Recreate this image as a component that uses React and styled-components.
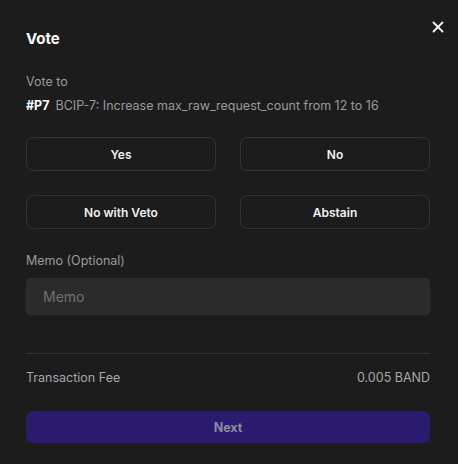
import styled, { createGlobalStyle } from "styled-components";

const GlobalStyle = createGlobalStyle`
  html, body {
    margin: 0;
    background: #1c1c1c;
  }
  * {
    box-sizing: border-box;
  }
`;

const Modal = styled.div`
  position: relative;
  width: 458px;
  height: 464px;
  padding: 29px 28px 0 26px;
  background: #1c1c1c;
  font-family: Inter, "Noto Sans", sans-serif;
  color: #ffffff;
`;

const Title = styled.h2`
  margin: 0;
  font-size: 15px;
  line-height: 20px;
  font-weight: 700;
`;

const CloseButton = styled.button`
  position: absolute;
  top: 19px;
  right: 12px;
  width: 16px;
  height: 16px;
  padding: 0;
  border: none;
  background: none;
  cursor: pointer;
  display: flex;
  align-items: center;
  justify-content: center;
`;

const Label = styled.div`
  font-size: 12.5px;
  line-height: 18px;
  color: #9a9a9a;
  margin-top: ${({ $top }) => $top || 0}px;
`;

const Proposal = styled.div`
  margin-top: 6px;
  font-size: 12.5px;
  line-height: 18px;
  color: #9a9a9a;
  white-space: nowrap;

  b {
    color: #ffffff;
    font-weight: 700;
    margin-right: 6px;
  }
`;

const Options = styled.div`
  margin-top: 22px;
  display: grid;
  grid-template-columns: 1fr 1fr;
  column-gap: 24px;
  row-gap: 24px;
`;

const Option = styled.button`
  height: 34px;
  border: 1px solid #343434;
  border-radius: 7px;
  background: transparent;
  color: #f0f0f0;
  font-family: inherit;
  font-size: 12px;
  font-weight: 600;
  cursor: pointer;
`;

const MemoInput = styled.input`
  display: block;
  width: 100%;
  height: 37px;
  margin-top: 8px;
  padding: 0 16px;
  border: 1px solid #303030;
  border-radius: 4px;
  background: #2b2b2b;
  color: #ffffff;
  font-family: inherit;
  font-size: 14px;
  outline: none;

  &::placeholder {
    color: #707070;
  }
`;

const Divider = styled.hr`
  margin: 38px 0 0;
  border: none;
  border-top: 1px solid #333333;
`;

const FeeRow = styled.div`
  margin-top: 15px;
  display: flex;
  justify-content: space-between;
  align-items: center;
  font-size: 12.5px;
  line-height: 18px;
  color: #a8a8a8;
`;

const NextButton = styled.button`
  display: block;
  width: 100%;
  height: 32px;
  margin-top: 24px;
  border: none;
  border-radius: 7px;
  background: #2a1b6e;
  color: #8c8a9c;
  font-family: inherit;
  font-size: 12.5px;
  font-weight: 700;
`;

const options = ["Yes", "No", "No with Veto", "Abstain"];

const App = () => {
  return (
    <>
      <GlobalStyle />
      <Modal>
        <CloseButton aria-label="Close">
          <svg width="12" height="12" viewBox="0 0 12 12">
            <path d="M1.5 1.5L10.5 10.5M10.5 1.5L1.5 10.5" stroke="#ffffff" strokeWidth="1.8" strokeLinecap="round" />
          </svg>
        </CloseButton>
        <Title>Vote</Title>
        <Label $top={24}>Vote to</Label>
        <Proposal>
          <b>#P7</b>BCIP-7: Increase max_raw_request_count from 12 to 16
        </Proposal>
        <Options>
          {options.map((opt) => (
            <Option key={opt}>{opt}</Option>
          ))}
        </Options>
        <Label $top={23}>Memo (Optional)</Label>
        <MemoInput placeholder="Memo" />
        <Divider />
        <FeeRow>
          <span>Transaction Fee</span>
          <span>0.005 BAND</span>
        </FeeRow>
        <NextButton disabled>Next</NextButton>
      </Modal>
    </>
  );
};

export default App;
